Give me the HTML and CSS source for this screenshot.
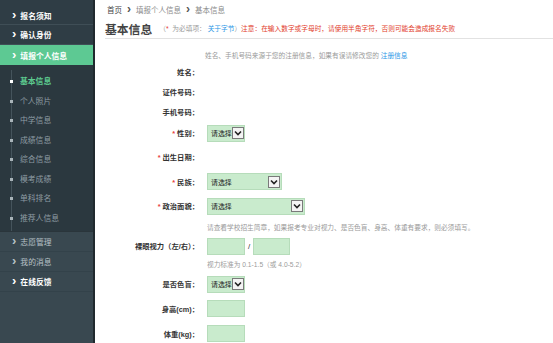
FILE: index.html
```html
<!DOCTYPE html>
<html lang="zh-CN">
<head>
    <meta charset="UTF-8">
    <title>基本信息</title>
    <link rel="stylesheet" href="styles.css">
</head>
<body>
    <div class="sidebar">
        <a class="nav-item first" href="#"><span class="chev">&#x203A;</span>报名须知</a>
        <a class="nav-item" href="#"><span class="chev">&#x203A;</span>确认身份</a>
        <a class="nav-item active" href="#"><span class="chev">&#x203A;</span>填报个人信息</a>
        <div class="sub-menu">
            <a class="sub-item current" href="#">基本信息</a>
            <a class="sub-item" href="#">个人照片</a>
            <a class="sub-item" href="#">中学信息</a>
            <a class="sub-item" href="#">成绩信息</a>
            <a class="sub-item" href="#">综合信息</a>
            <a class="sub-item" href="#">模考成绩</a>
            <a class="sub-item" href="#">单科排名</a>
            <a class="sub-item" href="#">推荐人信息</a>
        </div>
        <div class="nav-bottom">
            <a class="nav-item dim" href="#"><span class="chev">&#x203A;</span>志愿管理</a>
            <a class="nav-item dim" href="#"><span class="chev">&#x203A;</span>我的消息</a>
            <a class="nav-item" href="#"><span class="chev">&#x203A;</span>在线反馈</a>
        </div>
    </div>
    <div class="content">
        <div class="breadcrumb">
            <span class="crumb-home">首页</span>
            <span class="crumb-sep">&#x203A;</span>
            <span>填报个人信息</span>
            <span class="crumb-sep">&#x203A;</span>
            <span>基本信息</span>
        </div>
        <div class="title-bar">
            <h1>基本信息</h1>
            <p class="note">（<span class="req">*</span> 为必填项： <span class="link">关于字节</span>）<span class="warn">注意：在输入数字或字母时，请使用半角字符，否则可能会造成报名失败</span></p>
        </div>
        <div class="form">
            <p class="info">姓名、手机号码来源于您的注册信息，如果有误请修改您的 <span class="link">注册信息</span></p>
            <div class="row"><label>姓名：</label></div>
            <div class="row"><label>证件号码：</label></div>
            <div class="row"><label>手机号码：</label></div>
            <div class="row row-22">
                <label><span class="req">*</span>性别：</label>
                <div class="select w-38"><span>请选择</span><i class="arrow"><svg viewBox="0 0 10 10"><polyline points="2,3.5 5,6.5 8,3.5" fill="none" stroke="#222" stroke-width="1.6"/></svg></i></div>
            </div>
            <div class="row row-25"><label><span class="req">*</span>出生日期：</label></div>
            <div class="row row-25">
                <label><span class="req">*</span>民族：</label>
                <div class="select w-75"><span>请选择</span><i class="arrow"><svg viewBox="0 0 10 10"><polyline points="2,3.5 5,6.5 8,3.5" fill="none" stroke="#222" stroke-width="1.6"/></svg></i></div>
            </div>
            <div class="row row-24">
                <label><span class="req">*</span>政治面貌：</label>
                <div class="select w-98"><span>请选择</span><i class="arrow"><svg viewBox="0 0 10 10"><polyline points="2,3.5 5,6.5 8,3.5" fill="none" stroke="#222" stroke-width="1.6"/></svg></i></div>
            </div>
            <p class="hint hint-18">请查看学校招生简章，如果报考专业对视力、是否色盲、身高、体重有要求，则必须填写。</p>
            <div class="row">
                <label>裸眼视力（左/右）：</label>
                <div class="input w-38"></div>
                <span class="slash">/</span>
                <div class="input w-37"></div>
            </div>
            <p class="hint hint-16">视力标准为 0.1-1.5（或 4.0-5.2）</p>
            <div class="row row-24">
                <label>是否色盲：</label>
                <div class="select w-38"><span>请选择</span><i class="arrow"><svg viewBox="0 0 10 10"><polyline points="2,3.5 5,6.5 8,3.5" fill="none" stroke="#222" stroke-width="1.6"/></svg></i></div>
            </div>
            <div class="row row-25">
                <label>身高(cm)：</label>
                <div class="input w-38"></div>
            </div>
            <div class="row row-25">
                <label>体重(kg)：</label>
                <div class="input w-38"></div>
            </div>
        </div>
    </div>
</body>
</html>
```

FILE: styles.css
```css
body {
    margin: 0;
    font-family: "Liberation Sans", "Noto Sans CJK SC", sans-serif;
    background-color: #ffffff;
    display: flex;
    height: 343px;
    overflow: hidden;
}
.sidebar {
    width: 93px;
    flex: none;
    background-color: #394850;
    border-right: 2px solid #20292e;
    display: flex;
    flex-direction: column;
}
.nav-item {
    display: flex;
    align-items: center;
    height: 19px;
    padding-left: 12px;
    border-bottom: 1px solid #3f4e56;
    background-color: #2f3d45;
    color: #ffffff;
    font-size: 7.8px;
    font-weight: bold;
    text-decoration: none;
}
.nav-item.first {
    height: 25px;
    padding-top: 6px;
    box-sizing: border-box;
}
.nav-item.active {
    background-color: #5dc993;
    border-bottom: none;
    height: 20px;
}
.chev {
    font-size: 13px;
    font-weight: bold;
    margin-right: 4px;
    line-height: 1;
    position: relative;
    top: -1px;
}
.sub-menu {
    background-color: #2b383f;
    padding: 6px 0 4px 0;
    position: relative;
}
.sub-menu::before {
    /* 左侧竖线 */
    content: "";
    position: absolute;
    left: 11px;
    top: 5px;
    bottom: 0;
    width: 1px;
    background-color: #45545c;
}
.sub-item {
    display: flex;
    align-items: center;
    height: 19.5px;
    padding-left: 20px;
    color: #8e9ca3;
    font-size: 7.8px;
    text-decoration: none;
    position: relative;
}
.sub-item::before {
    content: "";
    position: absolute;
    left: 10px;
    top: 9px;
    width: 3px;
    height: 3px;
    background-color: #a9b4b9;
}
.sub-item.current {
    color: #5dcb8f;
    font-weight: bold;
}
.sub-item.current::before {
    background-color: #ffffff;
}
.nav-bottom {
    flex: 1;
    background-color: #394850;
    border-top: 1px solid #2a353b;
}
.nav-bottom .nav-item {
    background-color: #394850;
    border-bottom: 1px solid #33424a;
}
.nav-item.dim {
    color: #b8c2c7;
    font-weight: normal;
}
.content {
    flex: 1;
    padding-left: 10px;
    color: #333333;
}
.breadcrumb {
    display: flex;
    align-items: center;
    gap: 5px;
    height: 18px;
    padding-left: 2px;
    font-size: 7.5px;
    color: #8a8a8a;
}
.crumb-home {
    color: #444444;
}
.crumb-sep {
    font-size: 12px;
    font-weight: bold;
    color: #555555;
    line-height: 1;
}
.title-bar {
    display: flex;
    align-items: center;
    height: 20px;
    border-bottom: 1px solid #e2e2e2;
}
.title-bar h1 {
    margin: 0;
    font-size: 11.8px;
    color: #444444;
    font-weight: bold;
}
.note {
    margin: 0 0 0 7px;
    font-size: 6.7px;
    color: #999999;
}
.req {
    color: #e8403a;
    margin-right: 2px;
}
.link {
    color: #2d97e6;
}
.warn {
    color: #e2402c;
}
.form {
    padding-top: 11px;
}
.info {
    margin: 0;
    height: 12px;
    line-height: 12px;
    padding-left: 100px;
    font-size: 6.7px;
    color: #999999;
}
.row {
    display: flex;
    align-items: center;
    height: 20px;
}
.row-22 {
    height: 22px;
}
.row-24 {
    height: 24px;
}
.row-25 {
    height: 25px;
}
.row label {
    width: 94px;
    margin-right: 8px;
    text-align: right;
    font-size: 7.3px;
    font-weight: bold;
    color: #333333;
}
.hint {
    margin: 0;
    padding-left: 102px;
    font-size: 6.7px;
    color: #9a9a9a;
    display: flex;
    align-items: center;
}
.hint-18 {
    height: 18px;
}
.hint-16 {
    height: 16px;
}
.select {
    display: flex;
    align-items: center;
    justify-content: space-between;
    height: 17px;
    box-sizing: border-box;
    padding: 0 1px 0 3px;
    background-color: #c9ebcd;
    border: 1px solid #b6dcba;
    font-size: 6.9px;
    color: #222222;
    white-space: nowrap;
}
.arrow {
    display: block;
    flex: none;
    width: 10px;
    height: 10px;
    background-color: #f4f4f4;
    border: 1px solid #7a7a7a;
}
.arrow svg {
    display: block;
    width: 10px;
    height: 10px;
}
.input {
    height: 17px;
    box-sizing: border-box;
    background-color: #c9ebcd;
    border: 1px solid #b6dcba;
}
.slash {
    margin: 0 3px;
    font-size: 8px;
    color: #333333;
}
.w-37 { width: 37px; }
.w-38 { width: 38px; }
.w-75 { width: 75px; }
.w-98 { width: 98px; }
```
